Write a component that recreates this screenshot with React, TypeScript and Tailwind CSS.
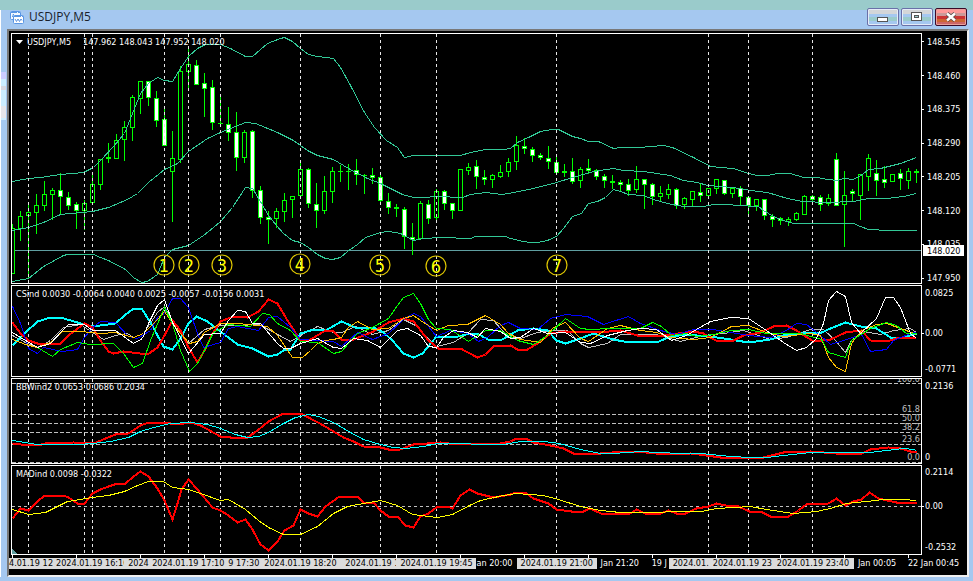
import React from 'react';

type Kind = 'up' | 'down' | 'doji';
// high, body top, body bottom, low, kind
type Candle = [number, number, number, number, Kind];

interface Series {
  color: string;
  width: number;
  points: string;
}

interface AxisLabel {
  text: string;
  gap: number;
  tick?: boolean;
}

const FIRST_X = 12;
const STEP = 8;

const candles: Candle[] = [
  [224, 228, 273, 273, 'up'], [211, 216, 228, 240, 'up'], [205, 212, 215, 277, 'up'], [194, 205, 212, 233, 'up'],
  [181, 194, 205, 210, 'up'], [188, 190, 194, 219, 'up'], [173, 190, 196, 214, 'down'], [192, 197, 205, 209, 'down'],
  [202, 204, 210, 228, 'down'], [200, 203, 210, 229, 'up'], [175, 184, 202, 203, 'up'], [159, 159, 184, 189, 'up'],
  [143, 157, 158, 162, 'doji'], [134, 140, 158, 158, 'up'], [121, 127, 139, 160, 'up'], [95, 97, 127, 140, 'up'],
  [81, 81, 98, 113, 'up'], [81, 81, 97, 105, 'down'], [91, 98, 120, 126, 'down'], [109, 119, 145, 145, 'down'],
  [131, 158, 171, 221, 'up'], [66, 71, 159, 162, 'up'], [49, 64, 71, 88, 'up'], [60, 65, 84, 84, 'down'],
  [73, 83, 88, 116, 'down'], [80, 87, 122, 129, 'down'], [97, 123, 123, 123, 'doji'], [107, 124, 132, 140, 'down'],
  [112, 132, 157, 170, 'down'], [130, 132, 157, 162, 'up'], [130, 131, 190, 197, 'down'], [186, 190, 217, 223, 'down'],
  [211, 217, 219, 243, 'down'], [208, 211, 218, 227, 'up'], [193, 200, 211, 221, 'up'], [196, 196, 199, 217, 'up'],
  [163, 169, 195, 195, 'up'], [168, 169, 203, 207, 'down'], [183, 204, 210, 227, 'down'], [176, 191, 210, 213, 'up'],
  [167, 171, 191, 202, 'up'], [165, 171, 171, 181, 'doji'], [164, 171, 171, 189, 'doji'], [159, 170, 174, 184, 'down'],
  [174, 175, 175, 193, 'doji'], [168, 175, 177, 183, 'down'], [175, 177, 200, 201, 'down'], [193, 201, 207, 213, 'down'],
  [204, 207, 208, 216, 'doji'], [207, 209, 236, 248, 'down'], [223, 237, 239, 254, 'down'], [201, 203, 238, 238, 'up'],
  [200, 204, 218, 223, 'down'], [189, 191, 217, 220, 'up'], [190, 191, 203, 209, 'down'], [203, 203, 210, 218, 'down'],
  [169, 169, 210, 210, 'up'], [163, 167, 170, 174, 'up'], [160, 166, 176, 188, 'down'], [170, 177, 179, 184, 'down'],
  [174, 175, 179, 187, 'up'], [165, 172, 176, 177, 'up'], [158, 162, 171, 176, 'up'], [136, 145, 161, 169, 'up'],
  [138, 146, 148, 153, 'down'], [147, 149, 155, 161, 'down'], [153, 155, 157, 159, 'down'], [146, 158, 161, 168, 'down'],
  [157, 162, 172, 173, 'down'], [164, 171, 172, 176, 'doji'], [158, 171, 181, 183, 'down'], [167, 169, 180, 187, 'up'],
  [159, 168, 170, 173, 'down'], [169, 170, 176, 179, 'down'], [174, 176, 180, 187, 'down'], [175, 181, 182, 188, 'doji'],
  [180, 182, 184, 191, 'down'], [179, 184, 190, 195, 'down'], [166, 179, 189, 192, 'up'], [179, 179, 184, 208, 'down'],
  [183, 184, 196, 204, 'down'], [186, 193, 196, 201, 'up'], [184, 189, 194, 198, 'up'], [188, 189, 205, 208, 'down'],
  [197, 198, 204, 208, 'up'], [191, 191, 199, 206, 'up'], [184, 192, 195, 201, 'down'], [188, 188, 195, 196, 'up'],
  [179, 179, 188, 193, 'up'], [180, 180, 193, 194, 'down'], [188, 188, 193, 197, 'up'], [186, 188, 196, 204, 'down'],
  [197, 197, 205, 213, 'down'], [199, 199, 205, 210, 'up'], [199, 199, 215, 219, 'down'], [214, 216, 219, 226, 'down'],
  [217, 218, 220, 224, 'down'], [217, 219, 221, 225, 'up'], [212, 213, 219, 220, 'up'], [195, 196, 214, 214, 'up'],
  [195, 196, 199, 201, 'down'], [195, 197, 204, 210, 'down'], [194, 198, 203, 205, 'up'], [153, 159, 205, 205, 'down'],
  [171, 195, 204, 246, 'up'], [189, 191, 193, 201, 'down'], [174, 174, 195, 219, 'up'], [154, 158, 176, 190, 'up'],
  [160, 173, 180, 195, 'down'], [166, 179, 182, 187, 'down'], [174, 174, 181, 181, 'up'], [169, 173, 178, 189, 'down'],
  [168, 171, 180, 188, 'up'], [169, 171, 172, 182, 'doji'],
];

const BAND = '#32c896';

const bands: Series[] = [
  {
    color: BAND,
    width: 1,
    points:
      '12,181 28,178 40,177 60,174 83,172 93,167 100,160 113,146 124,133 132,113 140,93 148,83 157,77 164,80 172,81 180,68 188,56 197,48 205,44 220,44 230,48 245,56 252,56 267,43 280,38 284,37 292,41 300,48 308,54 317,56 333,58 340,67 350,85 364,112 374,127 386,140 397,147 404,157 413,155 460,155 470,152 485,149 503,149 510,148 517,142 528,137 540,131 552,129 558,129 572,136 580,138 588,141 598,141 613,148 620,147 640,147 650,146 663,145 672,147 693,157 710,166 720,167 733,168 748,173 757,175 767,175 777,173 790,173 803,177 817,177 827,179 837,180 843,178 853,179 862,174 868,169 880,168 900,163 916,157',
  },
  {
    color: BAND,
    width: 1,
    points:
      '12,230 28,227 43,222 60,214 70,213 92,211 108,207 127,199 137,193 148,182 164,169 177,163 188,151 207,138 220,132 245,122 255,123 277,132 293,140 307,150 317,155 333,159 348,168 367,178 380,183 402,194 413,197 423,197 437,196 462,197 470,194 485,192 502,194 513,192 533,188 556,182 572,177 593,171 613,168 623,170 643,171 670,175 683,180 697,182 707,185 720,186 733,187 750,190 767,192 787,198 802,201 827,202 853,201 868,198 887,198 903,196 916,193',
  },
  {
    color: BAND,
    width: 1,
    points:
      '12,281 28,278 43,266 63,255 67,254 93,254 100,257 108,260 125,269 133,277 141,282 147,281 157,274 164,257 172,249 188,245 203,235 213,227 220,221 232,207 245,187 252,188 260,201 268,215 276,225 283,233 292,240 300,242 308,247 317,254 325,258 332,259 340,257 347,251 357,244 365,237 380,232 388,231 400,233 413,240 423,238 440,237 470,238 475,236 505,236 510,238 523,241 530,242 537,242 547,240 556,236 563,228 572,216 581,213 588,203 597,201 605,197 613,189 620,191 628,194 643,195 653,199 667,203 683,206 703,206 713,204 728,204 737,205 758,206 763,210 773,216 783,220 793,223 853,223 860,226 868,229 888,230 916,230',
  },
];

const strength: Series[] = [
  {
    color: '#c0c0c0',
    width: 1,
    points:
      '12,335 25,342 37,347 50,340 63,327 80,324 92,332 103,339 115,335 127,333 133,337 143,333 157,312 164,306 172,320 188,343 204,329 220,325 237,325 258,324 268,329 290,341 300,335 317,326 333,332 341,332 355,326 372,334 388,330 403,319 415,325 436,346 453,342 467,333 480,319 493,320 508,337 520,338 537,332 553,330 567,330 580,343 588,347 607,343 620,334 656,334 670,338 680,341 703,335 723,333 743,330 770,339 786,337 810,329 823,329 835,340 845,352 851,340 863,331 880,334 893,330 910,328 916,332',
  },
  {
    color: '#00ffff',
    width: 2,
    points:
      '12,345 25,332 37,321 50,317 60,317 77,322 92,326 115,323 124,315 133,308 141,308 150,322 163,346 172,349 180,338 188,323 196,316 207,321 220,331 237,344 252,348 268,356 277,354 283,350 290,349 300,333 310,330 327,329 341,321 357,328 373,327 383,332 392,340 403,353 413,357 422,353 436,336 453,337 470,333 477,333 487,339 500,340 517,330 533,328 547,330 556,340 565,343 580,338 593,333 613,339 623,341 656,342 668,337 683,334 710,336 730,339 748,342 770,339 783,335 810,332 821,332 830,328 845,322 860,326 876,328 890,337 903,337 916,333',
  },
  {
    color: '#ff0000',
    width: 2,
    points:
      '12,322 20,333 28,340 37,343 60,343 68,335 84,323 92,327 100,340 108,351 113,353 123,351 147,354 157,347 164,335 172,320 180,330 188,347 197,362 204,350 212,333 220,321 233,316 247,317 258,311 268,299 277,303 287,320 300,340 310,339 325,330 333,331 341,339 353,339 373,331 388,322 403,318 413,321 428,340 438,348 460,348 477,357 485,354 493,346 510,345 517,349 527,349 537,343 550,333 565,331 597,332 620,330 637,335 663,335 693,331 703,333 715,340 731,341 743,335 760,332 773,326 786,325 796,330 813,341 830,339 845,332 861,330 870,340 886,341 896,338 916,337',
  },
  {
    color: '#0000ff',
    width: 1,
    points:
      '12,306 20,323 28,348 37,353 43,347 62,351 77,349 84,337 92,327 100,321 115,322 128,336 137,338 150,330 157,317 164,313 172,298 180,298 188,307 197,333 203,347 213,344 220,342 228,328 237,326 258,330 268,317 277,316 290,327 300,339 333,341 341,346 357,332 372,339 388,333 403,319 413,313 420,316 436,336 450,330 468,333 478,341 487,337 500,325 508,322 520,328 537,329 550,318 565,314 587,316 603,324 628,316 640,323 660,330 676,334 693,329 713,329 730,332 748,335 770,337 786,330 796,323 806,324 820,335 830,344 843,340 861,334 870,351 886,349 893,340 910,333 916,332',
  },
  {
    color: '#ffc000',
    width: 1,
    points:
      '12,339 25,344 37,347 50,342 62,331 80,331 100,333 115,332 133,337 143,333 157,319 164,311 172,323 180,333 189,343 197,341 204,332 220,323 237,323 267,326 277,335 292,357 302,357 310,350 317,343 325,340 333,339 341,337 348,327 357,321 372,329 388,328 403,318 413,315 420,320 436,330 448,325 467,324 485,315 500,324 508,333 520,339 540,342 553,327 565,322 580,338 588,341 607,328 620,325 640,330 656,332 670,337 693,339 710,337 731,326 748,325 766,332 783,336 810,333 820,335 828,357 836,367 845,371 851,343 861,330 876,324 886,323 903,329 916,334',
  },
  {
    color: '#00ff00',
    width: 1,
    points:
      '12,332 25,340 37,347 52,356 60,349 77,342 90,344 113,343 123,353 133,367 142,363 150,340 164,307 172,323 180,350 189,371 197,363 204,350 213,332 228,324 250,326 262,313 269,314 277,323 290,330 300,341 317,342 333,353 341,351 357,333 370,328 388,318 397,305 403,297 413,293 420,303 428,319 436,328 450,329 468,341 485,330 500,330 517,340 533,344 547,335 565,318 580,328 590,329 610,328 640,328 652,322 661,326 671,335 686,333 696,336 713,334 731,330 748,329 766,333 800,333 821,339 828,352 845,357 851,340 870,328 886,322 896,325 906,333 916,333',
  },
  {
    color: '#ffffff',
    width: 1,
    points:
      '12,332 20,337 37,347 50,343 62,330 68,324 84,324 92,330 115,330 133,343 142,338 148,323 157,305 164,299 172,322 188,353 204,334 220,333 228,320 237,310 245,311 252,323 260,323 277,343 283,348 290,348 300,343 317,338 333,347 341,348 353,338 367,340 380,347 397,330 407,328 420,335 428,346 436,347 443,337 453,330 467,332 477,337 485,328 500,331 510,338 520,337 533,328 547,333 565,332 580,342 590,343 607,335 627,330 640,328 656,329 671,340 686,335 696,329 710,321 730,317 748,318 766,330 783,342 796,350 806,347 816,338 823,323 828,300 836,291 845,296 851,322 860,333 876,318 885,297 893,297 900,307 910,333 916,338',
  },
];

const bandWidth: Series[] = [
  {
    color: '#ff0000',
    width: 2,
    points:
      '12,443 20,444 37,445 45,443 73,442 93,443 115,434 128,433 140,425 148,422 163,422 177,424 190,422 200,425 220,436 230,437 247,437 257,430 268,421 283,413 300,413 308,417 323,425 343,437 353,441 363,446 380,447 392,450 400,449 413,444 440,442 457,444 500,443 510,441 516,438 525,438 533,442 550,445 563,448 573,453 600,453 623,451 636,451 665,454 690,453 706,455 720,457 746,457 763,457 783,452 810,451 836,453 861,453 870,449 888,447 900,448 910,451 916,451',
  },
  {
    color: '#00ffff',
    width: 1,
    points:
      '12,440 37,444 50,444 77,444 92,443 110,441 128,437 140,431 153,427 170,423 190,422 207,424 220,428 235,434 247,437 258,436 268,432 283,423 295,417 308,414 318,416 333,422 350,432 363,439 380,444 393,447 405,448 423,446 437,443 503,444 520,441 543,441 559,443 580,449 600,453 613,453 640,451 656,452 683,453 700,453 730,456 750,457 766,457 783,455 810,452 870,452 886,450 903,448 913,449 916,450',
  },
];

const maDistance: Series[] = [
  {
    color: '#ff0000',
    width: 2,
    points:
      '12,518 20,508 28,510 37,501 44,495 53,495 63,495 68,497 77,503 84,503 92,493 100,489 108,486 117,483 125,483 133,476 140,471 148,476 157,488 164,500 172,519 177,503 181,489 188,479 197,489 212,507 220,510 228,515 237,522 245,519 252,529 260,544 268,550 277,541 284,530 293,525 300,509 308,513 317,516 325,506 339,496 357,496 363,502 373,502 380,510 388,516 397,516 405,525 413,527 420,516 428,513 437,506 447,506 452,508 460,495 469,489 477,493 493,497 510,494 515,492 525,492 533,498 548,503 556,509 571,511 583,511 589,508 603,514 630,513 636,509 645,513 660,513 668,510 676,513 685,513 696,508 708,506 716,503 725,505 738,506 749,511 760,511 770,516 788,516 798,510 806,504 828,503 836,498 845,505 853,501 861,499 869,492 878,498 896,502 916,502',
  },
  {
    color: '#ffff00',
    width: 1,
    points:
      '12,509 28,514 45,512 57,506 67,501 92,497 108,495 124,491 137,485 148,481 163,481 172,487 188,489 200,493 220,500 228,499 245,509 258,520 268,527 283,534 300,534 317,526 333,513 347,506 363,503 380,500 397,505 412,514 437,517 452,514 469,505 480,500 503,495 516,493 543,495 558,499 580,506 600,510 620,512 660,512 670,511 701,511 716,508 750,506 766,509 793,513 816,511 830,508 846,503 866,501 883,499 903,499 916,500',
  },
];

const markers = [28, 84, 92, 164, 188, 220, 300, 380, 436, 556, 708, 748, 812];

const circled = [
  { n: 1, x: 164, y: 265 },
  { n: 2, x: 189, y: 265 },
  { n: 3, x: 222, y: 265 },
  { n: 4, x: 300, y: 264 },
  { n: 5, x: 380, y: 265 },
  { n: 6, x: 436, y: 266 },
  { n: 7, x: 557, y: 265 },
];

const levels = [
  { text: '100.0', line: 383, y: 382 },
  { text: '61.8', line: 414, y: 412 },
  { text: '50.0', line: 423, y: 421 },
  { text: '38.2', line: 432, y: 430 },
  { text: '23.6', line: 444, y: 442 },
  { text: '0.0', line: 462, y: 460 },
];

const priceAxis: AxisLabel[] = [
  { text: '148.545', gap: 3, tick: true },
  { text: '148.460', gap: 22, tick: true },
  { text: '148.375', gap: 22, tick: true },
  { text: '148.290', gap: 22, tick: true },
  { text: '148.205', gap: 22, tick: true },
  { text: '148.120', gap: 22, tick: true },
  { text: '148.035', gap: 22, tick: true },
  { text: '147.950', gap: 22, tick: true },
];

const strengthAxis: AxisLabel[] = [
  { text: '0.0825', gap: 2 },
  { text: '0.00', gap: 28, tick: true },
  { text: '-0.0771', gap: 24 },
];

const widthAxis: AxisLabel[] = [
  { text: '0.2136', gap: 2 },
  { text: '0', gap: 59 },
];

const distanceAxis: AxisLabel[] = [
  { text: '0.2114', gap: 1 },
  { text: '0.00', gap: 22, tick: true },
  { text: '-0.2532', gap: 29 },
];

const times = [
  { text: '4.01.19 1', w: 39, marked: true },
  { text: '2', w: 8, marked: true },
  { text: '2024.01.19 16:10', w: 68, marked: true },
  { text: '', w: 4, marked: true },
  { text: '2024', w: 24, marked: true },
  { text: '2024.01.19 17:10', w: 76, marked: true },
  { text: '9 17:30', w: 36, marked: true },
  { text: '2024.01.19 18:20', w: 81, marked: true },
  { text: '2024.01.19 1', w: 51, marked: true },
  { text: '', w: 4, marked: true },
  { text: '2024.01.19 19:45', w: 76, marked: true },
  { text: 'an 20:00', w: 40 },
  { text: '2024.01.19 21:00', w: 80, marked: true, indent: true },
  { text: 'Jan 21:20', w: 55, indent: true },
  { text: '19 J', w: 17 },
  { text: '2024.01.', w: 44, marked: true, indent: true },
  { text: '2024.01.19 23', w: 64, marked: true },
  { text: '2024.01.19 23:40', w: 77, marked: true },
  { text: 'Jan 00:05', w: 54, indent: true },
  { text: '22 Jan 00:45', w: 59 },
];

const ticks = Array.from({ length: 15 }, (_, i) => i * 64);

const Lines: React.FC<{ series: Series[] }> = ({ series }) => (
  <g transform="translate(0.5 0.5)" fill="none">
    {series.map((s, i) => (
      <polyline key={i} points={s.points} stroke={s.color} strokeWidth={s.width} />
    ))}
  </g>
);

const Markers: React.FC<{ top: number; bottom: number }> = ({ top, bottom }) => (
  <g stroke="#e6e6e6" strokeDasharray="3 3">
    {markers.map(x => (
      <line key={x} x1={x + 0.5} x2={x + 0.5} y1={top} y2={bottom} />
    ))}
  </g>
);

const Bar: React.FC<{ x: number; candle: Candle }> = ({ x, candle }) => {
  const [high, top, bottom, low, kind] = candle;
  return (
    <g stroke="#00ff00">
      <line x1={x + 0.5} x2={x + 0.5} y1={high} y2={low + 1} />
      {kind === 'doji' ? (
        <rect x={x - 2} y={top} width={5} height={bottom - top + 1} fill="#00ff00" stroke="none" />
      ) : (
        <rect
          x={x - 1.5}
          y={top + 0.5}
          width={4}
          height={bottom - top}
          fill={kind === 'up' ? '#000000' : '#ffffff'}
        />
      )}
    </g>
  );
};

interface PanelProps {
  viewBox: string;
  name: string;
  caption: React.ReactNode;
  axis: AxisLabel[];
  axisEnd: number;
  axisIndent: string;
  badge?: React.ReactNode;
  children: React.ReactNode;
}

const Panel: React.FC<PanelProps> = ({ viewBox, name, caption, axis, axisEnd, axisIndent, badge, children }) => (
  <section className="flex pl-0.5" aria-label={name}>
    <div className="relative min-w-0 flex-1 border border-white">
      <svg className="block h-auto w-full" viewBox={viewBox} shapeRendering="crispEdges">
        {children}
      </svg>
      <div className="absolute left-1 top-0.5 flex items-center whitespace-pre leading-3">{caption}</div>
    </div>
    <div className="relative flex w-[45px] shrink-0 flex-col">
      {axis.map(label => (
        <React.Fragment key={label.text}>
          <div className="basis-0" style={{ flexGrow: label.gap }} />
          <div className="flex h-3 items-center leading-3">
            <span className={label.tick ? 'h-px w-0.5 bg-white' : 'h-px w-0.5'} />
            <span className={axisIndent}>{label.text}</span>
          </div>
        </React.Fragment>
      ))}
      <div className="basis-0" style={{ flexGrow: axisEnd }} />
      {badge}
    </div>
  </section>
);

const TitleBar: React.FC = () => (
  <header className="flex h-[19px] items-center justify-between pb-[5px] pl-[3px] pr-0.5">
    <div className="flex items-center gap-1">
      <svg className="h-[15px] w-[15px]" viewBox="0 0 15 15" aria-hidden="true">
        <rect x="0.5" y="1.5" width="10" height="8" rx="1" fill="#f4f9ff" stroke="#5a96e4" />
        <path d="M1 2.500h9" stroke="#5a96e4" strokeDasharray="6 1" />
        <path d="M2 6.500h1V4.500h1" fill="none" stroke="#5a96e4" />
        <rect x="3.500" y="5.500" width="10" height="8" rx="1" fill="#ffffff" stroke="#5a96e4" />
        <path d="M4 6.500h9" stroke="#5a96e4" strokeDasharray="7 1" />
        <path d="M5 9l1.500 2.500L8 9l1.500 2.500L11 9l1 1.500" fill="none" stroke="#4a86d8" strokeWidth="0.900" />
      </svg>
      <h1 className="font-['Open_Sans',sans-serif] text-xs leading-4 text-[#1a1f2c]">USDJPY,M5</h1>
    </div>
    <div className="flex gap-0.5">
      <button
        type="button"
        aria-label="Minimize"
        className="flex h-[18px] w-8 items-center justify-center rounded-xs border border-[#6a70a8] bg-[linear-gradient(#d4d6d8_0_30%,#a5c8f0_30%_50%,#9acbcb_50%_74%,#a5c8f0_74%)] shadow-[inset_0_0_0_1px_#e4ecf8]"
      >
        <svg className="h-3 w-3" viewBox="0 0 12 12" shapeRendering="crispEdges">
          <rect x="0.500" y="6.500" width="10" height="4" rx="1" fill="#ffffff" stroke="#555555" />
        </svg>
      </button>
      <button
        type="button"
        aria-label="Maximize"
        className="flex h-[18px] w-8 items-center justify-center rounded-xs border border-[#6a70a8] bg-[linear-gradient(#d4d6d8_0_30%,#a5c8f0_30%_50%,#9acbcb_50%_74%,#a5c8f0_74%)] shadow-[inset_0_0_0_1px_#e4ecf8]"
      >
        <svg className="h-3 w-3" viewBox="0 0 12 12" shapeRendering="crispEdges">
          <rect x="0.500" y="1.500" width="10" height="8" fill="#ffffff" stroke="#555555" />
          <rect x="3.500" y="4.500" width="4" height="2" fill="#9acbcb" stroke="#555555" />
        </svg>
      </button>
      <button
        type="button"
        aria-label="Close"
        className="flex h-[18px] w-8 items-center justify-center rounded-xs border border-[#3a0a28] bg-[linear-gradient(#ff9999_0_22%,#cc9999_22%_46%,#cc3333_46%_64%,#cc6633_64%_82%,#cc6666_82%)] shadow-[inset_0_0_0_1px_#e8a09c]"
      >
        <svg className="h-3 w-3" viewBox="0 0 12 12">
          <path d="M2 2.500l8 7M10 2.500l-8 7" stroke="#5a4a4a" strokeWidth="4" />
          <path d="M2 2.500l8 7M10 2.500l-8 7" stroke="#ffffff" strokeWidth="2.400" />
        </svg>
      </button>
    </div>
  </header>
);

const TimeAxis: React.FC = () => (
  <footer className="h-5">
    <svg className="block h-[3px] w-full" viewBox="9 0 958 3" preserveAspectRatio="none" shapeRendering="crispEdges">
      {ticks.map(x => (
        <rect key={x} x={x + 12} y="0" width="1" height="3" fill="#ffffff" />
      ))}
    </svg>
    <div className="flex h-[11px] leading-[11px]">
      {times.map((t, i) => (
        <div
          key={i}
          className={
            t.marked
              ? 'min-w-0 basis-0 overflow-hidden whitespace-nowrap bg-[#dcdcdc] text-black'
              : 'min-w-0 basis-0 overflow-hidden whitespace-nowrap'
          }
          style={{ flexGrow: t.w }}
        >
          <span className={t.indent ? 'ml-1' : undefined}>{t.text}</span>
        </div>
      ))}
    </div>
  </footer>
);

const App: React.FC = () => (
  <div className="flex min-h-screen flex-col bg-[#a5c8f0] font-['DejaVu_Sans_Condensed','DejaVu_Sans',sans-serif] text-[9px] text-white">
    <div className="h-[10px] bg-[#9acbcb]" />
    <div className="flex flex-1 pb-1">
      <div className="w-[7px] shrink-0 border-l border-white pr-px pt-[62px]">
        <div className="h-[7px] bg-[#ccccff]" />
        <div className="h-[7px] bg-[#cceeff]" />
        <div className="h-1 bg-[#d8d8e0]" />
        <div className="h-4 bg-[#cceeff]" />
        <div className="h-3 bg-[#e6e6ea]" />
        <div className="h-0.5 bg-[#cceeff]" />
      </div>
      <div className="min-w-0 flex-1">
        <TitleBar />
        <main className="border-2 border-b-[#f0f0f0] border-l-[#787878] border-r-[#f0f0f0] border-t-[#787878] bg-black pt-0.5">
          <div className="flex flex-col gap-px">
            <Panel
              viewBox="12 34 909 249"
              name="USDJPY M5"
              axis={priceAxis}
              axisEnd={0}
              axisIndent="pl-[3px]"
              caption={
                <div className="flex items-center gap-3">
                  <div className="flex items-center gap-1">
                    <svg className="h-1 w-[7px]" viewBox="0 0 7 4">
                      <path d="M0 0h7L3.500 4z" fill="#ffffff" />
                    </svg>
                    <span>USDJPY,M5</span>
                  </div>
                  <span>147.962 148.043 147.952 148.020</span>
                </div>
              }
              badge={
                <div className="absolute bottom-7 left-px flex h-[11px] w-[41px] items-center bg-white pl-1 leading-3 text-black">
                  148.020
                </div>
              }
            >
              <line x1="12" x2="921" y1="250.5" y2="250.5" stroke="#5f9ea0" />
              {candles.map((c, i) => (
                <Bar key={i} x={FIRST_X + STEP * i} candle={c} />
              ))}
              <Lines series={bands} />
              <Markers top={34} bottom={283} />
              {circled.map(c => (
                <g key={c.n}>
                  <circle cx={c.x} cy={c.y} r="10" fill="none" stroke="#e0c800" strokeWidth="1.200" shapeRendering="auto" />
                  <text x={c.x} y={c.y + 7} textAnchor="middle" fontSize="18" fill="#ffff00">
                    {c.n}
                  </text>
                </g>
              ))}
            </Panel>

            <Panel
              viewBox="12 286 909 90"
              name="CSind"
              axis={strengthAxis}
              axisEnd={2}
              axisIndent="pl-px"
              caption="CSind 0.0030 -0.0064 0.0040 0.0025 -0.0057 -0.0156 0.0031"
            >
              <Markers top={286} bottom={376} />
              <Lines series={strength} />
            </Panel>

            <Panel
              viewBox="12 379 909 84"
              name="BBWind2"
              axis={widthAxis}
              axisEnd={1}
              axisIndent="pl-px"
              caption="BBWind2 0.0653 0.0686 0.2034"
            >
              <g stroke="#c0c0c0" strokeDasharray="4 2">
                {levels.map(l => (
                  <line key={l.text} x1="12" x2="921" y1={l.line + 0.5} y2={l.line + 0.5} />
                ))}
              </g>
              <Markers top={379} bottom={463} />
              <Lines series={bandWidth} />
              {levels.map(l => (
                <text key={l.text} x="920" y={l.y} textAnchor="end" fontSize="9" fill="#c0c0c0">
                  {l.text}
                </text>
              ))}
            </Panel>

            <Panel
              viewBox="12 466 909 88"
              name="MADind"
              axis={distanceAxis}
              axisEnd={2}
              axisIndent="pl-px"
              caption="MADind 0.0098 -0.0322"
            >
              <line x1="12" x2="921" y1="506.5" y2="506.5" stroke="#c0c0c0" strokeDasharray="3 3" />
              <Markers top={466} bottom={554} />
              <Lines series={maDistance} />
              <path d="M12 549v5h5z" fill="#5f9ea0" />
            </Panel>
          </div>
          <TimeAxis />
        </main>
      </div>
      <div className="w-1 shrink-0" />
    </div>
  </div>
);

export default App;
